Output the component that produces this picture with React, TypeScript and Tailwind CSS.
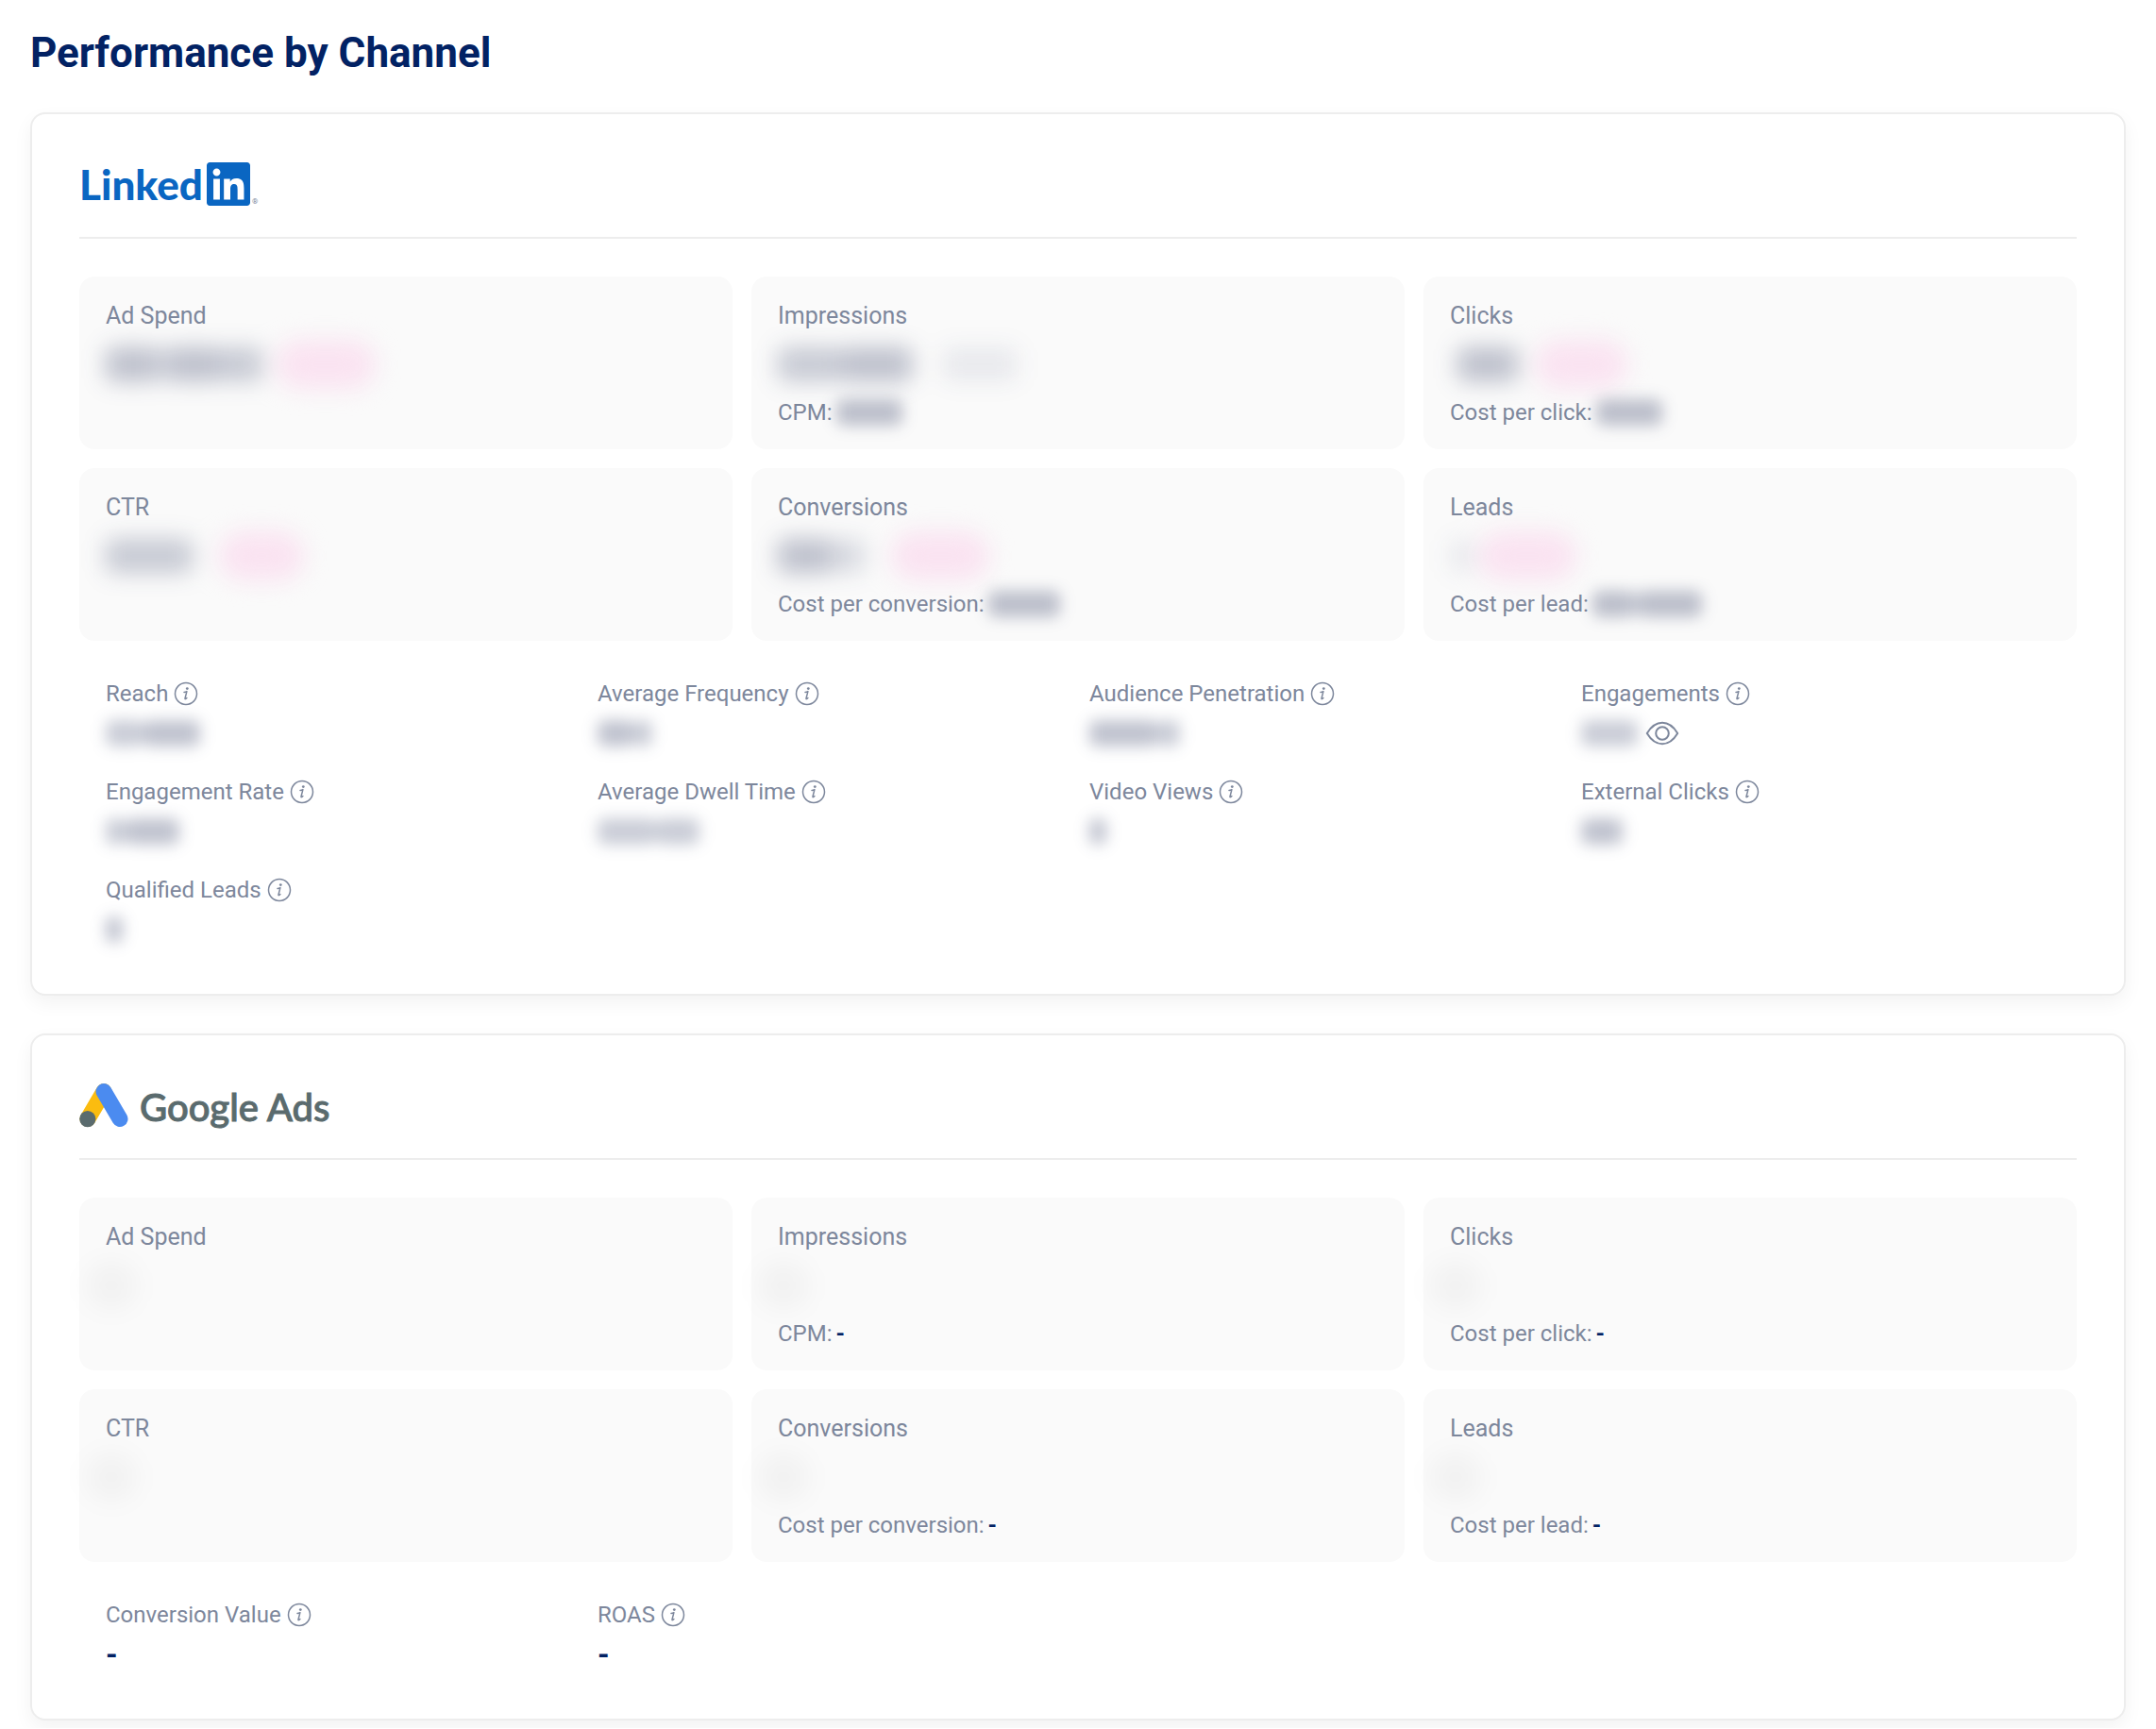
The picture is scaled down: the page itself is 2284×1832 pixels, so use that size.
import React from "react";

type Blob = { width: number; tone: string; gap?: number };
type Tile = { label: string; blobs: Blob[]; sub?: string; subBlobs?: Blob[]; subText?: string };
type Metric = { label: string; blobs?: Blob[]; text?: string; eye?: boolean };

const DARK = "rounded-lg bg-[#1c2754]/28";
const MID = "rounded-lg bg-[#1c2754]/23";
const SOFT = "rounded-lg bg-[#1c2754]/15";
const FAINT = "rounded-lg bg-[#1c2754]/8";
const GHOST = "rounded-full bg-black/3";
const PINK = "rounded-full bg-[#fae3f1]";

const linkedInTiles: Tile[] = [
  {
    label: "Ad Spend",
    blobs: [
      { width: 56, tone: DARK },
      { width: 8, tone: SOFT },
      { width: 60, tone: DARK },
      { width: 42, tone: MID },
      { width: 106, tone: PINK, gap: 14 },
    ],
  },
  {
    label: "Impressions",
    blobs: [
      { width: 66, tone: MID },
      { width: 76, tone: DARK },
      { width: 80, tone: FAINT, gap: 32 },
    ],
    sub: "CPM:",
    subBlobs: [{ width: 70, tone: DARK }],
  },
  {
    label: "Clicks",
    blobs: [
      { width: 64, tone: DARK, gap: 8 },
      { width: 98, tone: PINK, gap: 18 },
    ],
    sub: "Cost per click:",
    subBlobs: [{ width: 70, tone: DARK }],
  },
  {
    label: "CTR",
    blobs: [
      { width: 92, tone: MID },
      { width: 90, tone: PINK, gap: 28 },
    ],
  },
  {
    label: "Conversions",
    blobs: [
      { width: 58, tone: DARK },
      { width: 34, tone: SOFT },
      { width: 104, tone: PINK, gap: 28 },
    ],
    sub: "Cost per conversion:",
    subBlobs: [{ width: 76, tone: DARK }],
  },
  {
    label: "Leads",
    blobs: [
      { width: 24, tone: FAINT },
      { width: 104, tone: PINK, gap: 6 },
    ],
    sub: "Cost per lead:",
    subBlobs: [
      { width: 42, tone: DARK },
      { width: 8, tone: MID },
      { width: 66, tone: DARK },
    ],
  },
];

const ghost: Blob[] = [{ width: 56, tone: GHOST, gap: -22 }];

const googleTiles: Tile[] = [
  { label: "Ad Spend", blobs: ghost },
  { label: "Impressions", blobs: ghost, sub: "CPM:", subText: "-" },
  { label: "Clicks", blobs: ghost, sub: "Cost per click:", subText: "-" },
  { label: "CTR", blobs: ghost },
  { label: "Conversions", blobs: ghost, sub: "Cost per conversion:", subText: "-" },
  { label: "Leads", blobs: ghost, sub: "Cost per lead:", subText: "-" },
];

const linkedInMetrics: Metric[] = [
  { label: "Reach", blobs: [{ width: 40, tone: MID }, { width: 60, tone: DARK }] },
  { label: "Average Frequency", blobs: [{ width: 38, tone: DARK }, { width: 20, tone: MID }] },
  { label: "Audience Penetration", blobs: [{ width: 72, tone: DARK }, { width: 24, tone: MID }] },
  { label: "Engagements", blobs: [{ width: 60, tone: MID }], eye: true },
  { label: "Engagement Rate", blobs: [{ width: 22, tone: MID }, { width: 56, tone: DARK }] },
  { label: "Average Dwell Time", blobs: [{ width: 62, tone: MID }, { width: 46, tone: MID }] },
  { label: "Video Views", blobs: [{ width: 18, tone: DARK }] },
  { label: "External Clicks", blobs: [{ width: 44, tone: DARK }] },
  { label: "Qualified Leads", blobs: [{ width: 18, tone: DARK }] },
];

const googleMetrics: Metric[] = [
  { label: "Conversion Value", text: "-" },
  { label: "ROAS", text: "-" },
];

function blobHeight(tone: string, size: "large" | "small") {
  if (tone === PINK || tone === GHOST) return "h-[52px]";
  return size === "large" ? "h-9" : "h-7";
}

function Blobs({ items, size }: { items: Blob[]; size: "large" | "small" }) {
  return (
    <span
      aria-hidden="true"
      className={size === "large" ? "flex items-center blur-[12px]" : "flex items-center blur-[8px]"}
    >
      {items.map((b, i) => (
        <span
          key={i}
          className={`block ${b.tone} ${blobHeight(b.tone, size)}`}
          style={{ width: b.width, marginLeft: b.gap ?? 0 }}
        />
      ))}
    </span>
  );
}

function InfoIcon() {
  return (
    <svg viewBox="0 0 26 26" className="size-[26px]" fill="none" aria-hidden="true">
      <circle cx="13" cy="13" r="11.5" stroke="currentColor" strokeWidth="1.5" />
      <circle cx="14.3" cy="7.6" r="1.4" fill="currentColor" />
      <path
        d="M11 11.5c1.100-.1 2-.4 2.900-.9l-1.900 7.400c-.2.900.5.900 1.900-.5"
        stroke="currentColor"
        strokeWidth="1.500"
        strokeLinecap="round"
        strokeLinejoin="round"
      />
    </svg>
  );
}

function EyeIcon() {
  return (
    <svg viewBox="0 0 36 26" className="h-[26px] w-9" fill="none" stroke="currentColor" strokeWidth="2" aria-hidden="true">
      <path d="M1.800 13C6 6 11.500 1.800 18 1.800S30 6 34.200 13C30 20 24.500 24.200 18 24.200S6 20 1.800 13Z" strokeLinejoin="round" />
      <circle cx="18" cy="13" r="6.800" />
    </svg>
  );
}

function LinkedInLogo() {
  return (
    <div className="flex h-12 items-center text-[#0a66c2]">
      <span className="font-['Lato',sans-serif] text-[44px] leading-[48px] font-black">Linked</span>
      <svg viewBox="0 32 448 448" className="ml-1 size-[46px]" fill="currentColor" aria-hidden="true">
        <path d="M416 32H31.900C14.300 32 0 46.500 0 64.300v383.400C0 465.500 14.300 480 31.900 480H416c17.600 0 32-14.500 32-32.300V64.300c0-17.800-14.400-32.300-32-32.300zM135.400 416H69V202.200h66.500V416zm-33.200-243c-21.300 0-38.500-17.300-38.500-38.500S80.900 96 102.200 96c21.200 0 38.500 17.300 38.500 38.500 0 21.300-17.200 38.500-38.500 38.500zm282.100 243h-66.400V312c0-24.800-.5-56.700-34.500-56.700-34.600 0-39.900 27-39.900 54.900V416h-66.400V202.200h63.700v29.200h.9c8.900-16.800 30.600-34.500 62.900-34.500 67.200 0 79.700 44.300 79.700 101.900V416z" />
      </svg>
      <span className="ml-0.5 self-end text-[8px] leading-[10px] text-[#7d879c]">®</span>
    </div>
  );
}

function GoogleAdsLogo() {
  return (
    <div className="flex h-12 items-center">
      <svg viewBox="0 0 52 48" className="h-12 w-[52px]" aria-hidden="true">
        <path d="M26 9.500 9 38.500" stroke="#fbbc0f" strokeWidth="17" strokeLinecap="round" />
        <path d="M26 9.500 43 38.500" stroke="#4b8bf0" strokeWidth="17" strokeLinecap="round" />
        <circle cx="8.800" cy="38.600" r="8.600" fill="#5a6b6e" />
      </svg>
      <span className="ml-3 pt-1 font-['Lato',sans-serif] text-[40px] leading-[48px] font-medium text-[#5a6b6e] [-webkit-text-stroke:1px_#5a6b6e]">
        Google Ads
      </span>
    </div>
  );
}

function StatTile({ tile }: { tile: Tile }) {
  return (
    <div className="rounded-2xl bg-[#fafafa] px-7 pt-6 pb-[21px]">
      <h3 className="text-[25px] leading-9 text-[#7d879c]">{tile.label}</h3>
      <div className="flex h-[66px] items-center">
        <Blobs items={tile.blobs} size="large" />
      </div>
      <div className="flex h-9 items-center gap-1 text-[24px] leading-9 text-[#7d879c]">
        {tile.sub && <span>{tile.sub}</span>}
        {tile.subBlobs && <Blobs items={tile.subBlobs} size="small" />}
        {tile.subText && <span className="font-bold text-[#022264]">{tile.subText}</span>}
      </div>
    </div>
  );
}

function MetricItem({ metric }: { metric: Metric }) {
  return (
    <div>
      <div className="flex h-9 items-center gap-1.5 text-[24px] leading-9 text-[#7d879c]">
        <span>{metric.label}</span>
        <button type="button" aria-label={`About ${metric.label}`}>
          <InfoIcon />
        </button>
      </div>
      <div className="mt-1 flex h-10 items-center gap-2 text-[32px] leading-10 font-bold text-[#022264]">
        {metric.blobs && <Blobs items={metric.blobs} size="small" />}
        {metric.text}
        {metric.eye && (
          <button type="button" aria-label="View engagements" className="text-[#7d879c]">
            <EyeIcon />
          </button>
        )}
      </div>
    </div>
  );
}

function ChannelCard({
  name,
  logo,
  tiles,
  metrics,
}: {
  name: string;
  logo: React.ReactNode;
  tiles: Tile[];
  metrics: Metric[];
}) {
  return (
    <section
      aria-label={name}
      className="rounded-2xl border-2 border-[#ededed] bg-white px-[50px] pt-[50px] pb-12 shadow-[0_8px_20px_rgba(0,0,0,0.05)]"
    >
      <header className="border-b-2 border-[#ededed] pb-8">{logo}</header>
      <div className="mt-10 grid grid-cols-3 gap-5">
        {tiles.map((t) => (
          <StatTile key={t.label} tile={t} />
        ))}
      </div>
      <div className="mt-[38px] grid grid-cols-4 gap-6 px-7">
        {metrics.map((m) => (
          <MetricItem key={m.label} metric={m} />
        ))}
      </div>
    </section>
  );
}

export default function App() {
  return (
    <main className="bg-white px-8 pt-7 pb-2 font-['Roboto',sans-serif]">
      <h1 className="text-[44px] leading-[56px] font-bold text-[#022264]">Performance by Channel</h1>
      <div className="mt-[35px] flex flex-col gap-10">
        <ChannelCard name="LinkedIn" logo={<LinkedInLogo />} tiles={linkedInTiles} metrics={linkedInMetrics} />
        <ChannelCard name="Google Ads" logo={<GoogleAdsLogo />} tiles={googleTiles} metrics={googleMetrics} />
      </div>
    </main>
  );
}
